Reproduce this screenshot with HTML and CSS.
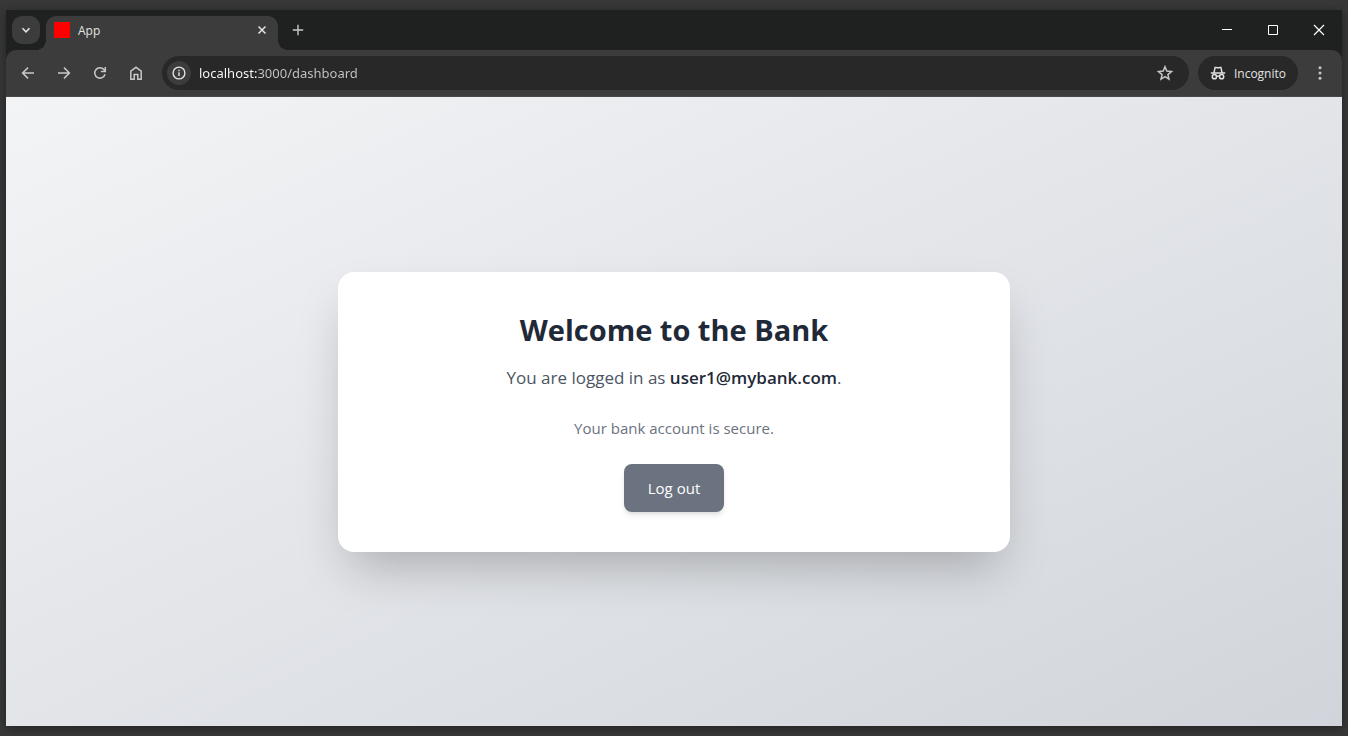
FILE: index.html
```html
<!DOCTYPE html>
<html lang="en">
<head>
<meta charset="utf-8">
<meta name="viewport" content="width=device-width, initial-scale=1">
<title>App</title>
<link rel="stylesheet" href="styles.css">
</head>
<body>
<div class="window">
  <header class="titlebar">
    <button class="tab-search" type="button" aria-label="Search tabs">
      <svg width="28" height="28" viewBox="0 0 28 28"><path d="M10.5 12.3l3.5 3.5 3.5-3.5" stroke-width="1.6"/></svg>
    </button>
    <div class="tab">
      <span class="favicon"></span>
      <span class="tab-title">App</span>
      <button class="tab-close" type="button" aria-label="Close tab">
        <svg width="16" height="16" viewBox="0 0 16 16"><path d="M4.5 4.5l7 7M11.5 4.5l-7 7" stroke-width="1.5"/></svg>
      </button>
    </div>
    <button class="new-tab" type="button" aria-label="New tab">
      <svg width="20" height="20" viewBox="0 0 20 20"><path d="M10 4.8v10.4M4.8 10h10.4" stroke-width="1.4"/></svg>
    </button>
    <div class="window-controls">
      <button type="button" aria-label="Minimize"><svg width="12" height="12" viewBox="0 0 12 12"><path d="M1 5.5h10"/></svg></button>
      <button type="button" aria-label="Maximize"><svg width="12" height="12" viewBox="0 0 12 12"><path d="M1.5 1.5h9v9h-9z"/></svg></button>
      <button type="button" aria-label="Close"><svg width="12" height="12" viewBox="0 0 12 12"><path d="M1 1l10 10M11 1L1 11" stroke-width="1.2"/></svg></button>
    </div>
  </header>

  <div class="toolbar">
    <nav class="nav-buttons" aria-label="Browser navigation">
      <button type="button" aria-label="Back"><svg width="20" height="20" viewBox="0 0 20 20"><path d="M16 10H4.8M10 4.6L4.6 10l5.4 5.4"/></svg></button>
      <button type="button" aria-label="Forward"><svg width="20" height="20" viewBox="0 0 20 20"><path d="M4 10h11.2M10 4.6l5.4 5.4-5.4 5.4"/></svg></button>
      <button type="button" aria-label="Reload"><svg width="20" height="20" viewBox="0 0 20 20"><path d="M15 11.2A5.2 5.2 0 1 1 13.9 6.5L15.2 7.9M15.3 4v4.4h-4.4"/></svg></button>
      <button type="button" aria-label="Home"><svg width="20" height="20" viewBox="0 0 20 20"><path d="M4.8 8.2L10 4.3l5.2 3.9v8h-3.4v-4.8H8.2v4.8H4.8z"/></svg></button>
    </nav>
    <div class="address">
      <button class="site-info" type="button" aria-label="Site information">
        <svg width="16" height="16" viewBox="0 0 16 16"><circle cx="8" cy="8" r="5.9" stroke-width="1.4"/><path d="M8 7.2v3.8M8 4.8v1.4" stroke-width="1.4"/></svg>
      </button>
      <input class="url" type="text" aria-label="Address" value="localhost:3000/dashboard" spellcheck="false">
      <button class="bookmark" type="button" aria-label="Bookmark this page">
        <svg width="20" height="20" viewBox="0 0 20 20"><path d="M10 3.8l1.8 4.3 4.7.4-3.6 3.1 1.1 4.6-4-2.5-4 2.5 1.1-4.6-3.6-3.1 4.7-.4z" stroke-width="1.5"/></svg>
      </button>
    </div>
    <button class="incognito" type="button">
      <svg width="16" height="16" viewBox="0 0 16 16"><path d="M.8 7.9h14.4M4 7.6L5.1 2.4H6.3L8 3l1.700-.6h1.200L12 7.600"/><circle cx="4.400" cy="11.700" r="2.100"/><circle cx="11.600" cy="11.700" r="2.100"/><path d="M6.400 11.400q1.600-.8 3.200 0"/></svg>
      <span>Incognito</span>
    </button>
    <button class="menu" type="button" aria-label="Menu">
      <svg width="20" height="20" viewBox="0 0 20 20"><circle cx="10" cy="4.8" r="1.5"/><circle cx="10" cy="10" r="1.5"/><circle cx="10" cy="15.2" r="1.5"/></svg>
    </button>
  </div>

  <main class="page">
    <section class="card">
      <h1 class="card-title">Welcome to the Bank</h1>
      <p class="card-user">You are logged in as <strong>user1@mybank.com</strong>.</p>
      <p class="card-note">Your bank account is secure.</p>
      <button class="logout" type="button">Log out</button>
    </section>
  </main>
</div>
</body>
</html>
```
FILE: styles.css
```css
* { box-sizing: border-box; }

body {
  margin: 0;
  min-height: 100vh;
  padding: 10px 6px;
  display: flex;
  background: #383838;
  font-family: "Open Sans", "Noto Sans", sans-serif;
}

button {
  display: flex;
  align-items: center;
  justify-content: center;
  padding: 0;
  border: 0;
  background: transparent;
  color: inherit;
  font: inherit;
}

svg {
  display: block;
  flex: none;
  fill: none;
  stroke: currentColor;
}

.window {
  flex: 1;
  min-width: 0;
  display: flex;
  flex-direction: column;
  background: #1f2120;
  box-shadow: 0 2px 10px rgba(0, 0, 0, 0.4);
}

.titlebar {
  height: 40px;
  padding-left: 6px;
  display: flex;
  align-items: center;
  color: #e3e3e3;
}

.tab-search {
  width: 28px;
  height: 28px;
  border-radius: 10px;
  background: #3c3c3c;
}

.tab {
  position: relative;
  align-self: flex-end;
  width: 232px;
  height: 34px;
  margin-left: 6px;
  padding: 0 8px 6px;
  display: flex;
  align-items: center;
  gap: 8px;
  border-radius: 10px 10px 0 0;
  background: #3c3c3c;
  font-size: 12px;
}

.tab::before,
.tab::after {
  content: "";
  position: absolute;
  bottom: 0;
  width: 10px;
  height: 10px;
}

.tab::before {
  right: 100%;
  background: radial-gradient(circle at 0 0, transparent 10px, #3c3c3c 10px);
}

.tab::after {
  left: 100%;
  background: radial-gradient(circle at 100% 0, transparent 10px, #3c3c3c 10px);
}

.favicon {
  width: 16px;
  height: 16px;
  background: #f00;
}

.tab-title { flex: 1; }

.new-tab {
  margin-left: 10px;
  color: #c7c7c7;
}

.window-controls {
  margin-left: auto;
  align-self: stretch;
  display: flex;
  color: #fff;
}

.window-controls button { width: 46px; }

.toolbar {
  height: 47px;
  padding: 0 12px;
  display: flex;
  align-items: center;
  border-bottom: 1px solid #484848;
  border-radius: 10px 10px 0 0;
  background: #3c3c3c;
  color: #c7c7c7;
}

.nav-buttons {
  display: flex;
  gap: 16px;
  stroke-width: 1.5;
}

.address {
  flex: 1;
  min-width: 0;
  height: 34px;
  margin-left: 16px;
  padding: 0 14px 0 5px;
  display: flex;
  align-items: center;
  border-radius: 17px;
  background: #282828;
}

.site-info {
  width: 24px;
  height: 24px;
  border-radius: 12px;
  background: #3c3c3c;
  color: #e3e3e3;
}

.url {
  flex: 1;
  min-width: 0;
  margin-left: 8px;
  padding: 0;
  border: 0;
  outline: 0;
  background: linear-gradient(90deg, #fff 59px, #c7c7c7 59px);
  background-clip: text;
  color: transparent;
  font: 13px/20px "Noto Sans", "Open Sans", sans-serif;
}

.incognito {
  height: 34px;
  margin-left: 9px;
  padding: 0 12px;
  gap: 8px;
  border-radius: 17px;
  background: #282828;
  color: #e3e3e3;
  font-size: 12px;
}

.incognito svg { stroke-width: 1.5; }

.menu { margin-left: 12px; }

.menu svg {
  fill: currentColor;
  stroke: none;
}

.page {
  flex: 1;
  padding: 16px;
  display: flex;
  align-items: center;
  justify-content: center;
  background: linear-gradient(to bottom right, #f3f4f6, #d1d5db);
}

.card {
  width: 100%;
  max-width: 672px;
  padding: 40px;
  display: flex;
  flex-direction: column;
  align-items: center;
  border-radius: 16px;
  background: #fff;
  box-shadow: 0 25px 50px -12px rgba(0, 0, 0, 0.25);
  text-align: center;
}

.card-title {
  margin: 0 0 16px;
  color: #1f2937;
  font-size: 29px;
  line-height: 36px;
  font-weight: 700;
}

.card-user {
  margin: 0 0 24px;
  color: #4b5563;
  font-size: 17px;
  line-height: 28px;
}

.card-user strong {
  color: #1f2937;
  font-weight: 600;
}

.card-note {
  margin: 0 0 24px;
  color: #6b7280;
  font-size: 15px;
  line-height: 24px;
}

.logout {
  padding: 12px 24px;
  border-radius: 8px;
  background: #6b7280;
  box-shadow: 0 4px 6px -1px rgba(0, 0, 0, 0.1), 0 2px 4px -2px rgba(0, 0, 0, 0.1);
  color: #fff;
  font-size: 15px;
  line-height: 24px;
}
```
